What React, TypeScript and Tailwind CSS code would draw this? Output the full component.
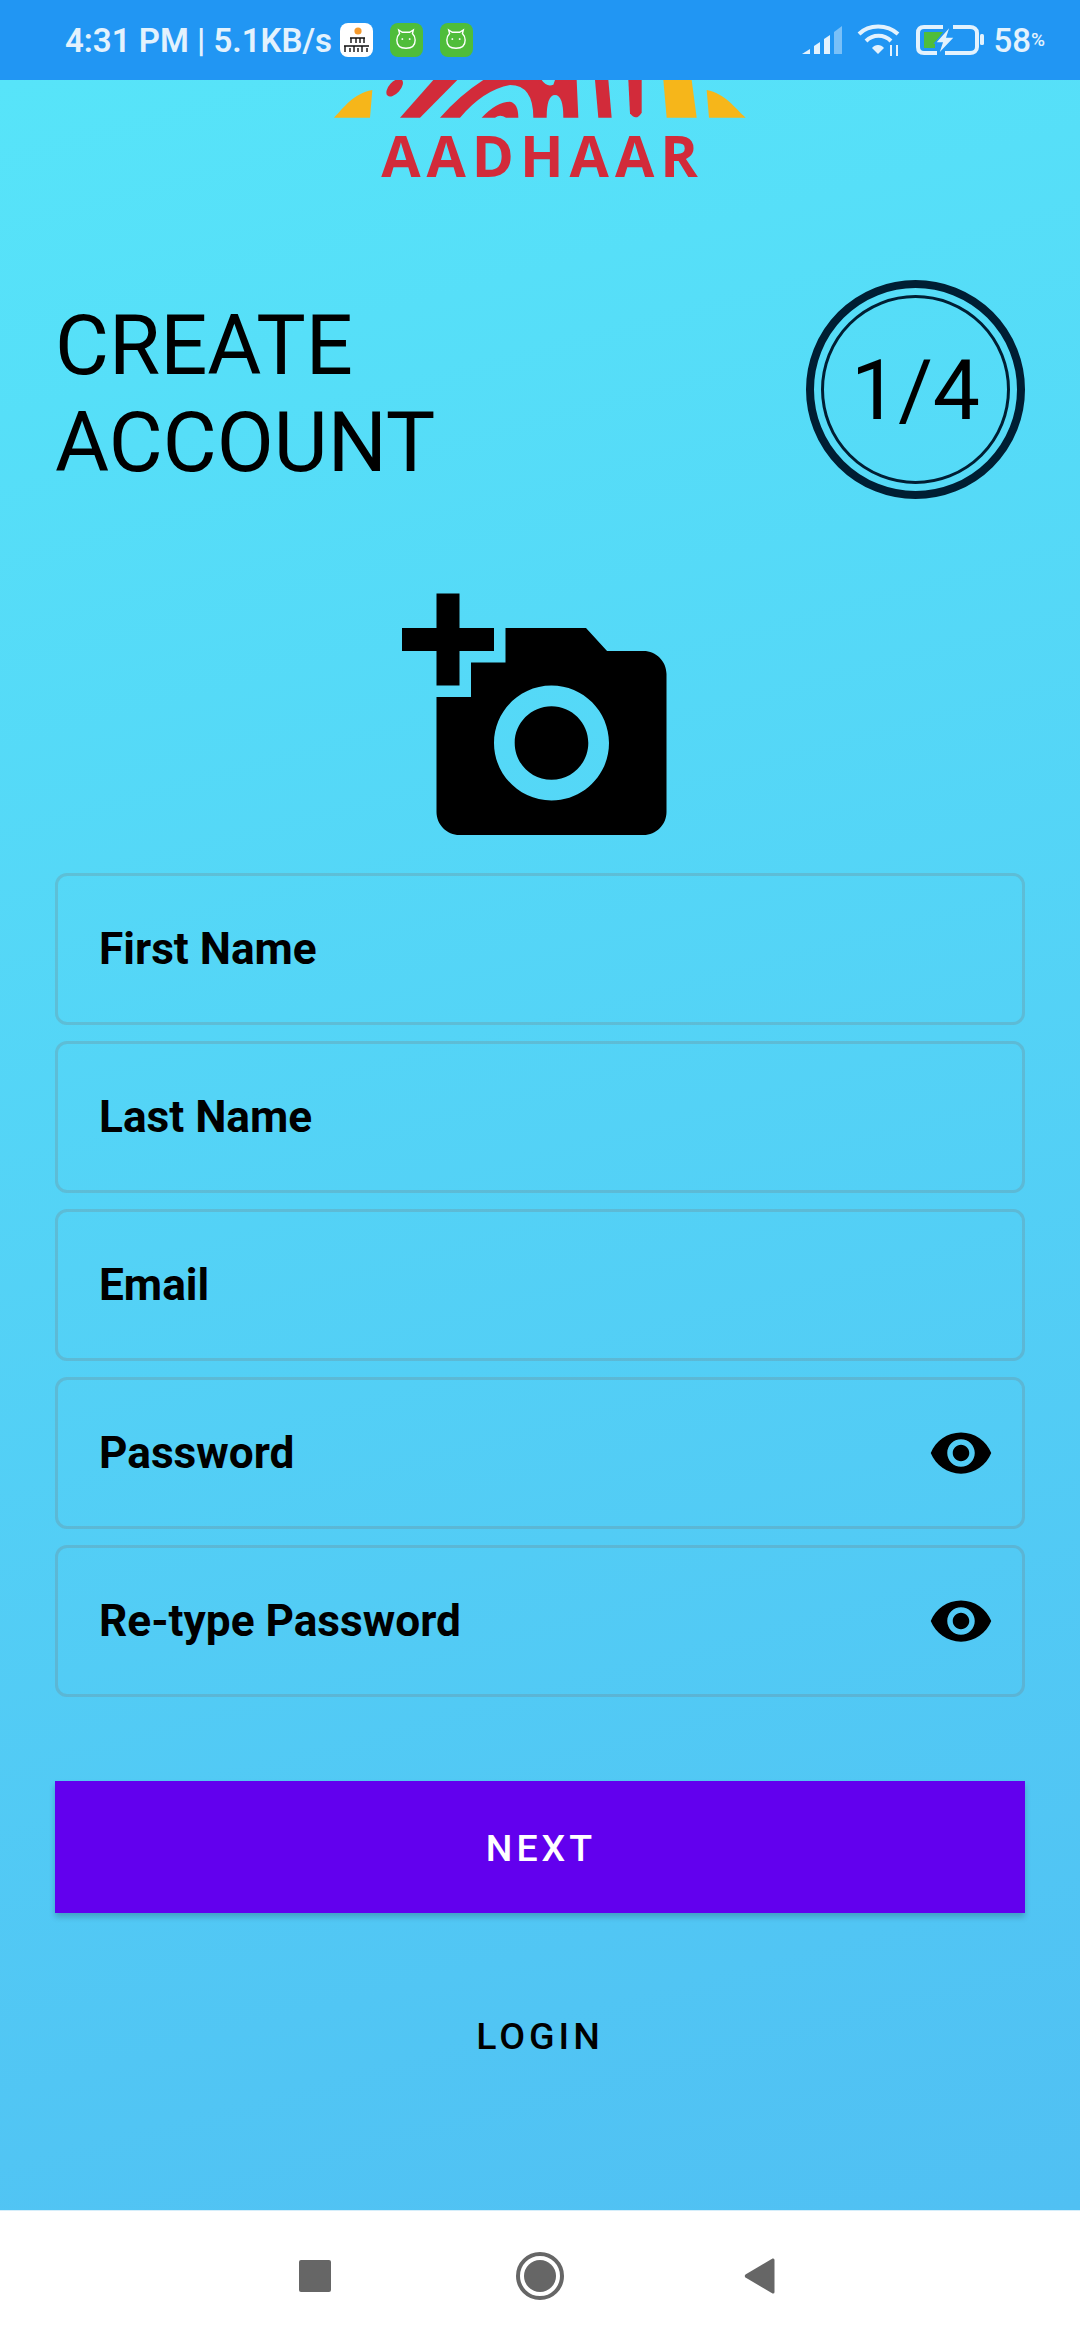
const fields = [
  { label: "First Name", eye: false },
  { label: "Last Name", eye: false },
  { label: "Email", eye: false },
  { label: "Password", eye: true },
  { label: "Re-type Password", eye: true },
];

function RobotIcon() {
  return (
    <div className="w-[33px] h-[34px] rounded-[8px] bg-[#4fbd3a] flex items-center justify-center">
      <svg width="22" height="24" viewBox="0 0 24 26" fill="none" stroke="#fff" strokeWidth="1.5">
        <path d="M5 6 L4 2 L8 4.5 H16 L20 2 L19 6 C21 8 22 10 22 13 C22 19 18 22 12 22 C6 22 2 19 2 13 C2 10 3 8 5 6 Z" />
        <path d="M8 11 V13 M7 12 H9 M16 11 V13 M15 12 H17" strokeWidth="1" />
      </svg>
    </div>
  );
}

function PaperIcon() {
  return (
    <div className="w-[33px] h-[34px] rounded-[8px] bg-white flex items-center justify-center">
      <svg width="29" height="30" viewBox="0 0 29 30">
        <circle cx="16" cy="6" r="3.6" fill="#f59a2c" />
        <path d="M8 13 H23 M9 13 V18 M14 13 V18 M18 13 V18 M22 13 V18" stroke="#111" strokeWidth="1.4" fill="none" />
        <path d="M2 21 H27 M3 21 V27 M8 23 V27 M12 21 V27 M16 23 V27 M20 21 V27 M25 23 V27" stroke="#111" strokeWidth="1.4" fill="none" />
      </svg>
    </div>
  );
}

function StatusRight() {
  return (
    <div className="flex items-center ml-auto text-[#e3f2fd]">
      {/* signal */}
      <svg width="42" height="30" viewBox="0 0 42 30" fill="#e3f2fd">
        <path d="M1 29 L9 24 V29 Z" />
        <path d="M13 21 L19 17 V29 H13 Z" />
        <path d="M23 14 L29 10 V29 H23 Z" />
        <path d="M33 7 L41 1 V29 H33 Z" fill="#90caf9" opacity="0.8" />
      </svg>
      {/* wifi */}
      <svg className="ml-[14px]" width="44" height="34" viewBox="0 0 44 34" fill="none" stroke="#e3f2fd">
        <path d="M2 11 C12 1 30 1 41 11" strokeWidth="4" />
        <path d="M9 18 C16 11 27 11 34 18" strokeWidth="4" />
        <path d="M15 25 L21 31 L27 25 C24 21 18 21 15 25 Z" fill="#e3f2fd" strokeWidth="0" />
        <path d="M34 33 V22 M40 33 V22" strokeWidth="2" />
      </svg>
      {/* battery */}
      <svg className="ml-[14px]" width="70" height="32" viewBox="0 0 70 32" fill="none">
        <path d="M28 3 H9 C5 3 3 5 3 9 V23 C3 27 5 29 9 29 H22" stroke="#e3f2fd" strokeWidth="4" />
        <path d="M38 3 H55 C59 3 62 5 62 9 V23 C62 27 59 29 55 29 H30" stroke="#e3f2fd" strokeWidth="4" />
        <path d="M9 8 H28 L20 19 V24 H9 Z" fill="#4fbd3a" />
        <path d="M36 1 L20 19 H27 L23 31 L40 13 H32 Z" fill="#e3f2fd" stroke="#2196f3" strokeWidth="1.5" />
        <rect x="65" y="10" width="4" height="11" rx="1.5" fill="#e3f2fd" />
      </svg>
      <span className="ml-[8px] text-[33px] font-medium leading-none">58</span>
      <span className="text-[19px] font-medium leading-none self-end mb-[8px]">%</span>
    </div>
  );
}

function StatusBar() {
  return (
    <div className="h-[80px] shrink-0 bg-[#2196f3] flex items-center pl-[65px] pr-[35px] text-[#e3f2fd]">
      <span className="text-[33px] font-semibold leading-none whitespace-nowrap">4:31 PM | 5.1KB/s</span>
      <div className="flex items-center gap-[17px] ml-[8px]">
        <PaperIcon />
        <RobotIcon />
        <RobotIcon />
      </div>
      <StatusRight />
    </div>
  );
}

// fingerprint arc, cut off by the status bar above it
function AadhaarLogo() {
  return (
    <div className="flex flex-col items-center">
      <svg width="440" height="38" viewBox="0 30 1320 114">
        <g fill="#f6b61a">
          <path d="M42 143 C70 115 100 70 157 60 L150 143 Z" />
          <path d="M1277 143 C1245 115 1215 70 1160 60 L1167 143 Z" />
          <path d="M1030 30 H1115 L1130 143 H1040 Z" />
        </g>
        <g fill="#d22b3a">
          <ellipse cx="224" cy="53" rx="32" ry="17" transform="rotate(-48 224 53)" />
          <path d="M240 143 L340 30 H412 L300 143 Z" />
          <path d="M360 143 Q420 75 490 30 H665 Q680 52 700 44 L705 30 H770 L775 143 H730 Q730 75 705 75 Q680 75 680 143 H640 Q640 45 570 45 Q490 60 420 143 Z" />
          <path d="M485 143 Q530 95 570 95 Q595 100 595 143 H558 Q540 132 525 143 Z" />
          <path d="M825 30 H865 L875 143 H835 Z" />
          <path d="M925 30 H965 L965 128 Q948 155 930 130 Z" />
        </g>
      </svg>
      <span className="mt-[5px] pl-[5px] text-[57px] leading-[64px] font-bold tracking-[6px] text-[#d22b3a] font-['Open_Sans',sans-serif]">
        AADHAAR
      </span>
    </div>
  );
}

function StepCircle() {
  return (
    <div className="w-[219px] h-[219px] rounded-full border-[8px] border-[#001e33] flex items-center justify-center">
      <div className="w-[189px] h-[189px] rounded-full border-[3px] border-[#001e33] flex items-center justify-center pt-[2px]">
        <span className="text-[84px] leading-none text-black">1/4</span>
      </div>
    </div>
  );
}

function AddPhotoIcon() {
  return (
    <svg width="276" height="276" viewBox="0 0 24 24" fill="#000">
      <path d="M3 4V1h2v3h3v2H5v3H3V6H0V4h3zm3 6V7h3V4h7l1.83 2H21c1.1 0 2 .9 2 2v12c0 1.1-.9 2-2 2H5c-1.1 0-2-.9-2-2V10h3zm7 9c2.76 0 5-2.24 5-5s-2.24-5-5-5-5 2.24-5 5 2.24 5 5 5zm-3.2-5c0 1.77 1.43 3.2 3.2 3.2s3.2-1.43 3.2-3.2-1.43-3.2-3.2-3.2-3.2 1.43-3.2 3.2z" />
    </svg>
  );
}

function EyeIcon() {
  return (
    <svg width="66" height="66" viewBox="0 0 24 24" fill="#000">
      <path d="M12 4.5C7 4.5 2.73 7.61 1 12c1.73 4.39 6 7.5 11 7.5s9.27-3.11 11-7.5c-1.73-4.39-6-7.5-11-7.5zM12 17c-2.76 0-5-2.24-5-5s2.24-5 5-5 5 2.24 5 5-2.24 5-5 5zm0-8c-1.66 0-3 1.34-3 3s1.34 3 3 3 3-1.34 3-3-1.34-3-3-3z" />
    </svg>
  );
}

function Field({ label, eye }: { label: string; eye: boolean }) {
  return (
    <div className="h-[152px] rounded-[12px] border-[3px] border-[rgba(120,120,120,0.25)] flex items-center justify-between pl-[41px] pr-[28px]">
      <span className="text-[44.2px] font-bold text-black leading-none">{label}</span>
      {eye && <EyeIcon />}
    </div>
  );
}

function NavBar() {
  return (
    <div className="h-[130px] shrink-0 bg-white border-t-[1px] border-[#d6eefa] flex items-center">
      <div className="ml-[299px] w-[32px] h-[32px] rounded-[2px] bg-[#666]" />
      <div className="ml-[185px] w-[48px] h-[48px] rounded-full border-[4px] border-[#666] flex items-center justify-center">
        <div className="w-[32px] h-[32px] rounded-full bg-[#666]" />
      </div>
      <svg className="ml-[180px]" width="31" height="36" viewBox="0 0 30 36" fill="#666">
        <path d="M28 0.5 Q30 0 30 2 V34 Q30 36 28 35.5 L1 19.5 Q-0.5 18 1 16.5 Z" />
      </svg>
    </div>
  );
}

export default function App() {
  return (
    <div className="w-[1080px] h-[2340px] flex flex-col overflow-hidden font-['Roboto',sans-serif]">
      <StatusBar />
      <div className="flex-1 flex flex-col px-[55px] bg-[linear-gradient(165deg,#57e4f9,#50c0f3)]">
        <AadhaarLogo />

        <div className="mt-[93px] flex items-start justify-between">
          <h1 className="mt-[17px] text-[83px] leading-[97px] font-normal text-black">
            CREATE
            <br />
            ACCOUNT
          </h1>
          <StepCircle />
        </div>

        <div className="mt-[83px] flex justify-center">
          <AddPhotoIcon />
        </div>

        <div className="mt-[15px] flex flex-col gap-[16px]">
          {fields.map((f) => (
            <Field key={f.label} label={f.label} eye={f.eye} />
          ))}
        </div>

        <button className="mt-[84px] h-[132px] pt-[2px] pl-[2px] bg-[#6200ee] text-white text-[37.5px] font-medium tracking-[4px] shadow-[0_4px_6px_rgba(0,0,0,0.2)]">
          NEXT
        </button>

        <button className="mt-[62px] h-[120px] pt-[2px] text-black text-[37.5px] font-medium tracking-[4px] flex items-center justify-center">
          LOGIN
        </button>
      </div>
      <NavBar />
    </div>
  );
}
